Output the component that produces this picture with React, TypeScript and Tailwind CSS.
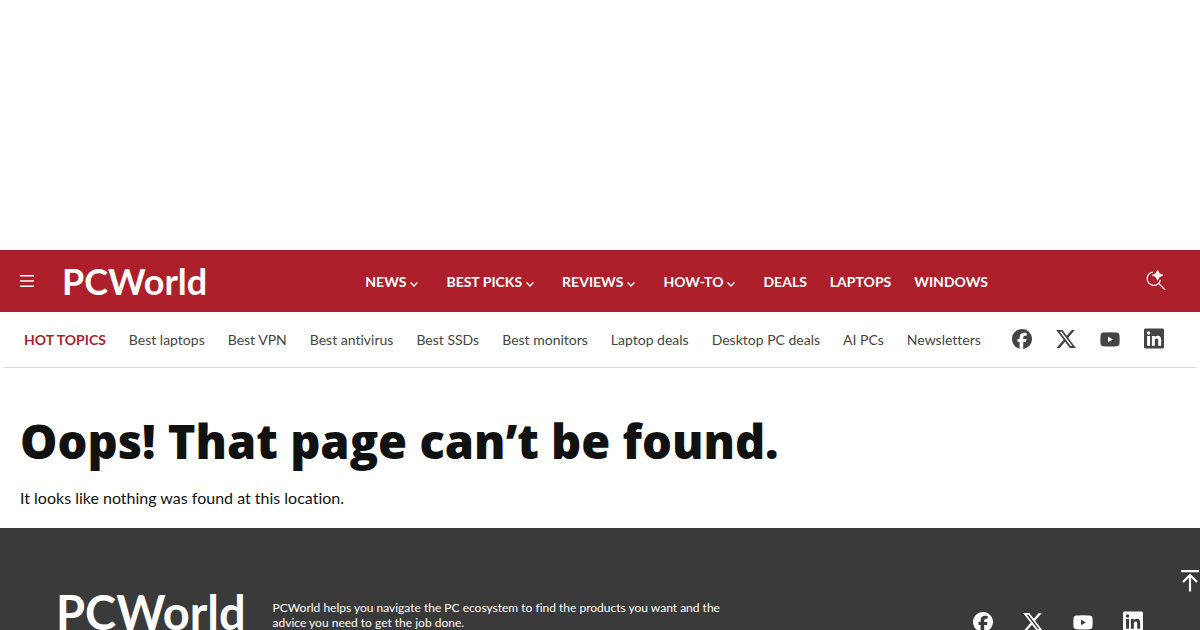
import { FaFacebook, FaLinkedin, FaXTwitter } from "react-icons/fa6";

const navItems = [
  { label: "News", hasMenu: true },
  { label: "Best Picks", hasMenu: true },
  { label: "Reviews", hasMenu: true },
  { label: "How-To", hasMenu: true },
  { label: "Deals", hasMenu: false },
  { label: "Laptops", hasMenu: false },
  { label: "Windows", hasMenu: false },
];

const hotTopics = [
  "Best laptops",
  "Best VPN",
  "Best antivirus",
  "Best SSDs",
  "Best monitors",
  "Laptop deals",
  "Desktop PC deals",
  "AI PCs",
  "Newsletters",
];

function YouTubeIcon() {
  return (
    <svg viewBox="0 0 20 20" width="20" height="20" fill="currentColor" fillRule="evenodd">
      <path d="M3.5 3.5Q10 3 16.5 3.5Q19.3 3.6 19.5 6.5Q19.8 10.5 19.5 14.5Q19.3 17.2 16.5 17.3Q10 17.7 3.5 17.3Q.7 17.2.5 14.5Q.2 10.5.5 6.5Q.7 3.6 3.5 3.5ZM8 7.6V13.2L12.8 10.4Z" />
    </svg>
  );
}

function SearchIcon() {
  return (
    <svg viewBox="0 0 20 22" width="20" height="22" fill="none" stroke="currentColor" strokeWidth="1.2">
      <path d="M7 2A6.7 6.7 0 1 0 14.4 9.8M12.7 13.4L19 19.9" />
      <path d="M11.6.2L13.4 3.6L17 5.2L13.4 6.8L11.6 10.2L9.8 6.8L6.2 5.2L9.8 3.6Z" fill="currentColor" strokeWidth=".6" />
    </svg>
  );
}

function Chevron() {
  return (
    <svg viewBox="0 0 8 5" width="8" height="5" fill="none" stroke="currentColor" strokeWidth="1.4" className="mt-1">
      <path d="M.6.6L4 4L7.4.6" />
    </svg>
  );
}

function SocialLinks({ className }: { className: string }) {
  const links = [
    { name: "Facebook", icon: <FaFacebook size={20} /> },
    { name: "X", icon: <FaXTwitter className="h-[22px] w-5" preserveAspectRatio="xMidYMid slice" /> },
    { name: "YouTube", icon: <YouTubeIcon /> },
    { name: "LinkedIn", icon: <FaLinkedin className="h-[23px] w-5" /> },
  ];

  return (
    <div className={`flex shrink-0 items-center ${className}`}>
      {links.map((link) => (
        <a key={link.name} href="#" aria-label={link.name}>
          {link.icon}
        </a>
      ))}
    </div>
  );
}

function Header() {
  return (
    <header>
      <div className="flex h-[62px] items-center bg-[#ad1f2b] pr-[34px] pl-5 text-white">
        <button type="button" aria-label="Menu">
          <svg viewBox="0 0 14 12" width="14" height="12" fill="currentColor">
            <path d="M0 0h14v1.6H0zM0 5.2h14v1.6H0zM0 10.4h14v1.6H0z" />
          </svg>
        </button>
        <a href="#" className="ml-7 text-4xl leading-none font-bold">
          PCWorld
        </a>
        <nav className="mx-auto flex items-center gap-[23px] pt-[2px] text-sm font-bold uppercase">
          {navItems.map((item) =>
            item.hasMenu ? (
              <button key={item.label} type="button" className="flex items-center gap-1 pr-[5px] uppercase">
                {item.label}
                <Chevron />
              </button>
            ) : (
              <a key={item.label} href="#">
                {item.label}
              </a>
            )
          )}
        </nav>
        <button type="button" aria-label="Search">
          <SearchIcon />
        </button>
      </div>
      <div className="mx-1 flex h-14 items-center justify-between border-b border-[#dcdcdc] pr-8 pb-[2px] pl-5 text-[#444]">
        <div className="flex items-center gap-[23px] pt-[2px] text-sm whitespace-nowrap">
          <span className="font-bold text-[#ad1f2b] uppercase">Hot Topics</span>
          {hotTopics.map((topic) => (
            <a key={topic} href="#">
              {topic}
            </a>
          ))}
        </div>
        <SocialLinks className="gap-6" />
      </div>
    </header>
  );
}

function Footer() {
  return (
    <footer className="flex items-start bg-[#3a3a3a] pt-[61px] pr-[57px] pl-14 text-white">
      <a href="#" className="text-[47px] leading-none font-bold">
        PCWorld
      </a>
      <p className="mt-[11px] ml-[27px] max-w-[460px] text-xs leading-[15px]">
        PCWorld helps you navigate the PC ecosystem to find the products you want and the advice you need to get the
        job done.
      </p>
      <SocialLinks className="mt-[21px] ml-auto gap-[30px]" />
    </footer>
  );
}

export default function App() {
  return (
    <div className="bg-white font-[Lato,sans-serif] text-[#111] [font-variant-ligatures:none]">
      {/* leaderboard ad slot */}
      <div className="h-[250px]" />
      <Header />
      <main className="px-5 pt-[43px] pb-5">
        <h1 className="font-['Open_Sans',sans-serif] text-[47px] leading-[60px] font-extrabold">
          Oops! That page can’t be found.
        </h1>
        <p className="mt-4 text-base leading-[21px]">It looks like nothing was found at this location.</p>
      </main>
      <Footer />
      <button type="button" aria-label="Back to top" className="fixed right-0 bottom-[38px] text-white">
        <svg viewBox="0 0 20 23" width="20" height="23" fill="none" stroke="currentColor" strokeWidth="2.2">
          <path d="M1 2.1h18M10 22.5V7M3 13l7-7 7 7" />
        </svg>
      </button>
    </div>
  );
}
